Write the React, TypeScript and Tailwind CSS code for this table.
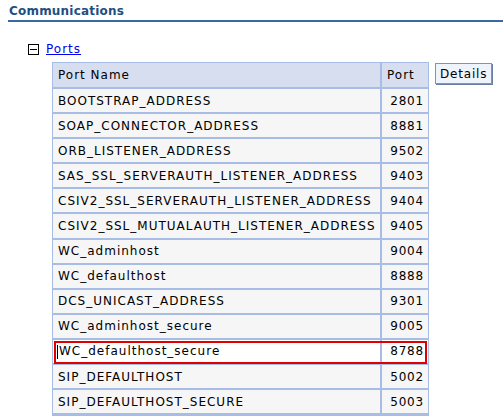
import React from "react";

const ports = [
  { name: "BOOTSTRAP_ADDRESS", port: "2801" },
  { name: "SOAP_CONNECTOR_ADDRESS", port: "8881" },
  { name: "ORB_LISTENER_ADDRESS", port: "9502" },
  { name: "SAS_SSL_SERVERAUTH_LISTENER_ADDRESS", port: "9403" },
  { name: "CSIV2_SSL_SERVERAUTH_LISTENER_ADDRESS", port: "9404" },
  { name: "CSIV2_SSL_MUTUALAUTH_LISTENER_ADDRESS", port: "9405" },
  { name: "WC_adminhost", port: "9004" },
  { name: "WC_defaulthost", port: "8888" },
  { name: "DCS_UNICAST_ADDRESS", port: "9301" },
  { name: "WC_adminhost_secure", port: "9005" },
  { name: "WC_defaulthost_secure", port: "8788", marked: true },
  { name: "SIP_DEFAULTHOST", port: "5002" },
  { name: "SIP_DEFAULTHOST_SECURE", port: "5003" },
];

export default function App() {
  return (
    <div className="w-[503px] h-[417px] overflow-hidden bg-white text-[12px] text-black tracking-[1px]" style={{ fontFamily: '"DejaVu Sans", Verdana, sans-serif' }}>
      <div className="ml-2 pt-[4px]">
        <div className="font-bold text-[#1f4f82] text-[12px] leading-[15px] pl-[1px] tracking-[0.2px]">Communications</div>
        <div className="h-[2px] bg-[#3a6aa0] mt-[1px]" />
      </div>

      <div className="pl-[28px] pt-[20px] flex items-center gap-[7px]">
        <div className="w-[11px] h-[11px] border border-black flex items-center justify-center">
          <div className="w-[7px] h-[1px] bg-black" />
        </div>
        <a className="text-[#0000ee] underline leading-[14px]">Ports</a>
      </div>

      <div className="flex items-start pl-[52px] pt-[6px] gap-[6px]">
        <table className="w-[377px] border-separate border-spacing-0 border border-[#a7bde6]">
          <thead>
            <tr className="bg-[#d7deef]">
              <th className="h-[26px] text-left font-normal pl-[5px] border-r-2 border-b-2 border-[#a7bde6]">Port Name</th>
              <th className="w-[46px] text-left font-normal pl-[5px] border-b-2 border-[#a7bde6]">Port</th>
            </tr>
          </thead>
          <tbody>
            {ports.map((p) => (
              <tr
                key={p.name}
                className={p.marked ? "bg-white outline-2 -outline-offset-3 outline-[#e00000]" : "bg-[#f6f6f6]"}
              >
                <td className="h-[25.1px] pl-[5px] border-r-2 border-b-2 border-[#a7bde6]">
                  {p.marked && <span className="inline-block w-[1px] h-[14px] bg-black align-middle mr-[1px] -ml-[1px]" />}
                  {p.name}
                </td>
                <td className="text-right pr-[4px] tracking-[0.8px] border-b-2 border-[#a7bde6]">{p.port}</td>
              </tr>
            ))}
          </tbody>
        </table>
        <button className="mt-[1px] h-[21px] px-[4px] border border-[#7f95b8] bg-[#eef3fc] text-[12px] leading-[18px] tracking-[0.8px] shadow-[1px_1px_0_#6a7fa3]">
          Details
        </button>
      </div>
    </div>
  );
}
